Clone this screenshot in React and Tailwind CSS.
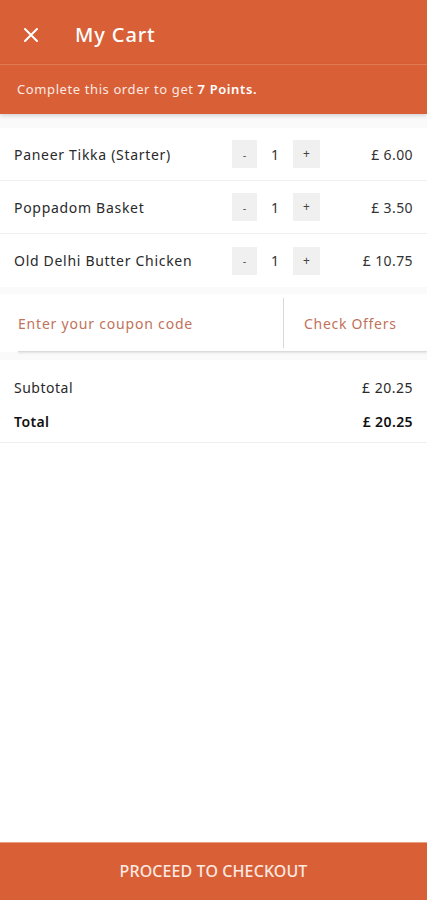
import React from "react";

const items = [
  { name: "Paneer Tikka (Starter)", qty: 1, price: "£ 6.00" },
  { name: "Poppadom Basket", qty: 1, price: "£ 3.50" },
  { name: "Old Delhi Butter Chicken", qty: 1, price: "£ 10.75" },
];

export default function App() {
  return (
    <div
      className="w-[427px] h-[900px] bg-[#fafafa] flex flex-col text-[#222]"
      style={{ fontFamily: '"Noto Sans", "Open Sans", sans-serif' }}
    >
      <header className="h-[64px] bg-[#d95f37] flex items-center pt-[5px] shrink-0">
        <div className="w-[60px] flex items-center justify-center pl-[2px]">
          <svg width="18" height="18" viewBox="0 0 18 18" fill="none">
            <path d="M3 3L15 15M15 3L3 15" stroke="#fff" strokeWidth="2" strokeLinecap="round" />
          </svg>
        </div>
        <h1 className="ml-[15px] text-white text-[20px] leading-none font-medium tracking-[0.9px]">My Cart</h1>
      </header>
      <div className="h-[50px] bg-[#d95f37] border-t border-[#e27a55] flex items-center px-[17px] shadow-[0_2px_4px_rgba(0,0,0,0.15)] shrink-0">
        <p className="text-[13px] text-[#fbe9e2] tracking-[0.6px]">
          Complete this order to get <span className="font-semibold text-white">7 Points.</span>
        </p>
      </div>

      <div className="mt-[14px] bg-white">
        {items.map((it, i) => (
          <div
            key={i}
            className={`h-[53px] flex items-center pl-[14px] pr-[14px] ${i < items.length - 1 ? "border-b border-[#efefef]" : ""}`}
          >
            <span className="flex-1 text-[14px] text-[#2a2a2a] tracking-[0.7px]">{it.name}</span>
            <div className="flex items-center">
              <div className="w-[25px] h-[28px] bg-[#f0f0f0] flex items-center justify-center text-[11px] text-[#555] leading-none">-</div>
              <div className="w-[36px] text-center text-[14px] text-[#333]">{it.qty}</div>
              <div className="w-[27px] h-[28px] bg-[#f0f0f0] flex items-center justify-center text-[12px] text-[#444] leading-none">+</div>
            </div>
            <span className="w-[93px] text-right text-[14px] text-[#333] tracking-[0.4px]">{it.price}</span>
          </div>
        ))}
      </div>

      <div className="mt-[7px] bg-white h-[58px] flex items-stretch relative">
        <div className="flex-1 flex items-center pl-[18px]">
          <span className="text-[14px] text-[#c0735b] tracking-[0.8px]">Enter your coupon code</span>
        </div>
        <div className="w-[1px] bg-[#d8d8d8] my-[4px]" />
        <div className="w-[143px] flex items-center pl-[20px]">
          <span className="text-[14px] text-[#c0735b] tracking-[0.7px]">Check Offers</span>
        </div>
        <div className="absolute left-[18px] right-0 bottom-0 h-[1px] bg-[#dcdcdc] shadow-[0_1px_2px_rgba(0,0,0,0.15)]" />
      </div>

      <div className="mt-[8px] bg-white h-[83px] flex flex-col pt-[18px] px-[14px] gap-[14px] border-b border-[#efefef]">
        <div className="flex justify-between text-[14px] leading-[20px] text-[#2a2a2a] tracking-[0.5px]">
          <span>Subtotal</span>
          <span>£ 20.25</span>
        </div>
        <div className="flex justify-between text-[14px] leading-[20px] font-semibold text-[#111] tracking-[0.4px]">
          <span>Total</span>
          <span>£ 20.25</span>
        </div>
      </div>

      <div className="flex-1 bg-white" />

      <button className="h-[58px] bg-[#d95f37] text-[#fbe9e2] text-[16px] font-medium tracking-[0.1px] shrink-0 border-t border-[#e8a080] pb-[2px]">
        PROCEED TO CHECKOUT
      </button>
    </div>
  );
}
